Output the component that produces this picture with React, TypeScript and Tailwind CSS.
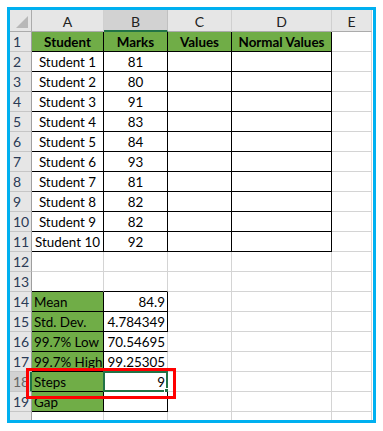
import React from "react";

type Cell = {
  text?: string;
  fill?: boolean;
  bold?: boolean;
  align?: "left" | "center" | "right";
  r?: string; // right border color
  b?: string; // bottom border color
  sel?: boolean;
};

const G = "#d4d4d4";
const K = "#000000";

function buildRows(): Cell[][] {
  const rows: Cell[][] = [];
  const hdr = ["Student", "Marks", "Values", "Normal Values"];
  rows.push([
    ...hdr.map((t) => ({ text: t, fill: true, bold: true, align: "center" as const, r: K, b: K })),
    { r: G, b: G },
  ]);
  const marks = [81, 80, 91, 83, 84, 93, 81, 82, 82, 92];
  marks.forEach((m, i) => {
    rows.push([
      { text: `Student ${i + 1}`, align: "center", r: K, b: K },
      { text: String(m), align: "center", r: K, b: K },
      { r: K, b: K },
      { r: K, b: K },
      { r: G, b: G },
    ]);
  });
  rows.push([{ r: G, b: G }, { r: G, b: G }, { r: G, b: G }, { r: G, b: G }, { r: G, b: G }]);
  rows.push([{ r: G, b: K }, { r: G, b: K }, { r: G, b: G }, { r: G, b: G }, { r: G, b: G }]);
  const stats: [string, string, string][] = [
    ["Mean", "84.9", K],
    ["Std. Dev.", "4.784349", K],
    ["99.7% Low", "70.54695", G],
    ["99.7% High", "99.25305", G],
    ["Steps", "9", K],
    ["Gap", "", K],
  ];
  stats.forEach(([a, v, rc]) => {
    rows.push([
      { text: a, fill: true, align: "left", r: K, b: K },
      { text: v, align: "right", r: rc, b: K, sel: a === "Steps" },
      { r: G, b: G },
      { r: G, b: G },
      { r: G, b: G },
    ]);
  });
  rows.push([{ r: G, b: G }, { r: G, b: G }, { r: G, b: G }, { r: G, b: G }, { r: G, b: G }]);
  return rows;
}

const cols = ["A", "B", "C", "D", "E"];

export default function App() {
  const rows = buildRows();
  return (
    <div
      className="relative w-[383px] h-[431px] bg-white overflow-hidden"
      style={{ fontFamily: "Lato, 'Open Sans', sans-serif" }}
    >
      <div className="ml-[7px] mt-[7px] w-[369px] h-[416px] border-[3px] border-[#00b0f0] overflow-hidden bg-white">
        <div className="grid grid-cols-[22px_72px_64px_64px_100px_40px] grid-rows-[22px_repeat(20,20px)] text-[13.4px] leading-none text-black">
          <div className="relative bg-[#e6e6e6] border-r border-b border-[#ababab]">
            <div className="absolute right-[3px] bottom-[3px] w-0 h-0 border-l-[12px] border-l-transparent border-b-[12px] border-b-[#b8b8b8]" />
          </div>
          {cols.map((c) => (
            <div
              key={c}
              className={
                c === "B"
                  ? "flex items-center justify-center bg-[#d2d2d2] border-r border-[#c0c0c0] border-b-2 border-b-[#217346] text-[#222] pt-[3px] text-[14px]"
                  : "flex items-center justify-center bg-[#e6e6e6] border-r border-[#d0d0d0] border-b border-b-[#ababab] text-[#222] pt-[2px] text-[14px]"
              }
            >
              {c}
            </div>
          ))}
          {rows.map((row, ri) => {
            const n = ri + 1;
            const selRow = n === 18;
            return (
              <React.Fragment key={ri}>
                <div
                  className={
                    selRow
                      ? "flex items-end pb-[2px] pl-[3px] bg-[#d2d2d2] border-b border-b-[#c6c6c6] border-r-2 border-r-[#217346] text-[#666] text-[14px]"
                      : "flex items-end pb-[2px] pl-[3px] bg-[#e6e6e6] border-b border-b-[#c6c6c6] border-r border-r-[#9e9e9e] text-[#2a3a55] text-[14px]"
                  }
                >
                  {n <= 19 ? n : ""}
                </div>
                {row.map((c, ci) => (
                  <div
                    key={ci}
                    className={`relative flex items-end pb-[2px] overflow-visible whitespace-nowrap border-r border-b ${
                      c.fill ? "bg-[#70ad47]" : "bg-white"
                    } ${c.bold ? "font-bold" : ""} ${
                      c.align === "center"
                        ? "justify-center"
                        : c.align === "right"
                        ? "justify-end pr-[2px]"
                        : "justify-start pl-[2px]"
                    }`}
                    style={{ borderRightColor: c.r, borderBottomColor: c.b }}
                  >
                    {c.text}
                    {c.sel && (
                      <>
                        <div className="absolute -left-px -top-px -right-px -bottom-px border-2 border-[#217346] pointer-events-none" />
                        <div className="absolute -right-[3px] -bottom-[3px] w-[6px] h-[6px] bg-[#217346] border border-white" />
                      </>
                    )}
                  </div>
                ))}
              </React.Fragment>
            );
          })}
        </div>
      </div>
      <div className="absolute left-[26px] top-[368px] w-[150px] h-[31px] border-[3px] border-[#ff0000] pointer-events-none" />
    </div>
  );
}
